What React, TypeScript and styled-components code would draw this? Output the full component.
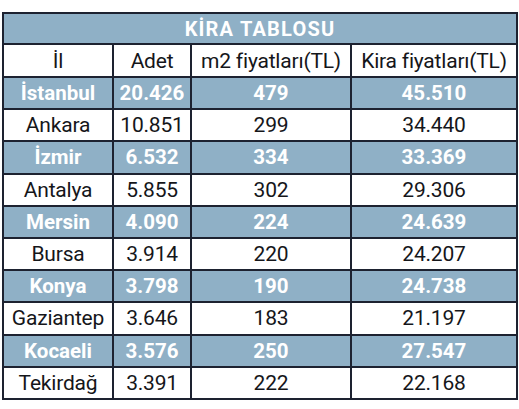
import React from 'react';
import styled, { createGlobalStyle } from 'styled-components';

const BLUE = '#8fb0c6';
const LINE = '#1d2230';

const GlobalStyle = createGlobalStyle`
  html, body {
    margin: 0;
    padding: 0;
    background: #ffffff;
  }
  body {
    font-family: Roboto, "Noto Sans", sans-serif;
  }
`;

const Page = styled.div`
  width: 519px;
  height: 409px;
  padding: 12px 0 0 2px;
  box-sizing: border-box;
`;

// grid lines come from the dark background showing through the gaps
const Table = styled.div`
  width: 516px;
  display: grid;
  grid-template-columns: 108px 76px 158px 164px;
  grid-template-rows: 29px 31px;
  grid-auto-rows: 30.2px;
  gap: 2px;
  padding: 2px;
  box-sizing: border-box;
  background: ${LINE};
`;

const Title = styled.div`
  grid-column: 1 / -1;
  display: flex;
  align-items: center;
  justify-content: center;
  background: ${BLUE};
  color: #ffffff;
  font-size: 20px;
  font-weight: 700;
  letter-spacing: 1.2px;
`;

const Cell = styled.div<{ $shaded?: boolean }>`
  display: flex;
  align-items: center;
  justify-content: center;
  white-space: nowrap;
  font-size: ${(p) => (p.$shaded ? '20.5px' : '21px')};
  letter-spacing: ${(p) => (p.$shaded ? '0' : '-0.2px')};
  background: ${(p) => (p.$shaded ? BLUE : '#ffffff')};
  color: ${(p) => (p.$shaded ? '#ffffff' : '#15161a')};
  font-weight: ${(p) => (p.$shaded ? 700 : 400)};
`;

const headers = ['İl', 'Adet', 'm2 fiyatları(TL)', 'Kira fiyatları(TL)'];

const rows = [
  ['İstanbul', '20.426', '479', '45.510'],
  ['Ankara', '10.851', '299', '34.440'],
  ['İzmir', '6.532', '334', '33.369'],
  ['Antalya', '5.855', '302', '29.306'],
  ['Mersin', '4.090', '224', '24.639'],
  ['Bursa', '3.914', '220', '24.207'],
  ['Konya', '3.798', '190', '24.738'],
  ['Gaziantep', '3.646', '183', '21.197'],
  ['Kocaeli', '3.576', '250', '27.547'],
  ['Tekirdağ', '3.391', '222', '22.168'],
];

const App: React.FC = () => (
  <Page>
    <GlobalStyle />
    <Table>
      <Title>KİRA TABLOSU</Title>
      {headers.map((h) => (
        <Cell key={h}>{h}</Cell>
      ))}
      {rows.map((r, i) =>
        r.map((v, j) => (
          <Cell key={`${i}-${j}`} $shaded={i % 2 === 0}>
            {v}
          </Cell>
        )),
      )}
    </Table>
  </Page>
);

export default App;
